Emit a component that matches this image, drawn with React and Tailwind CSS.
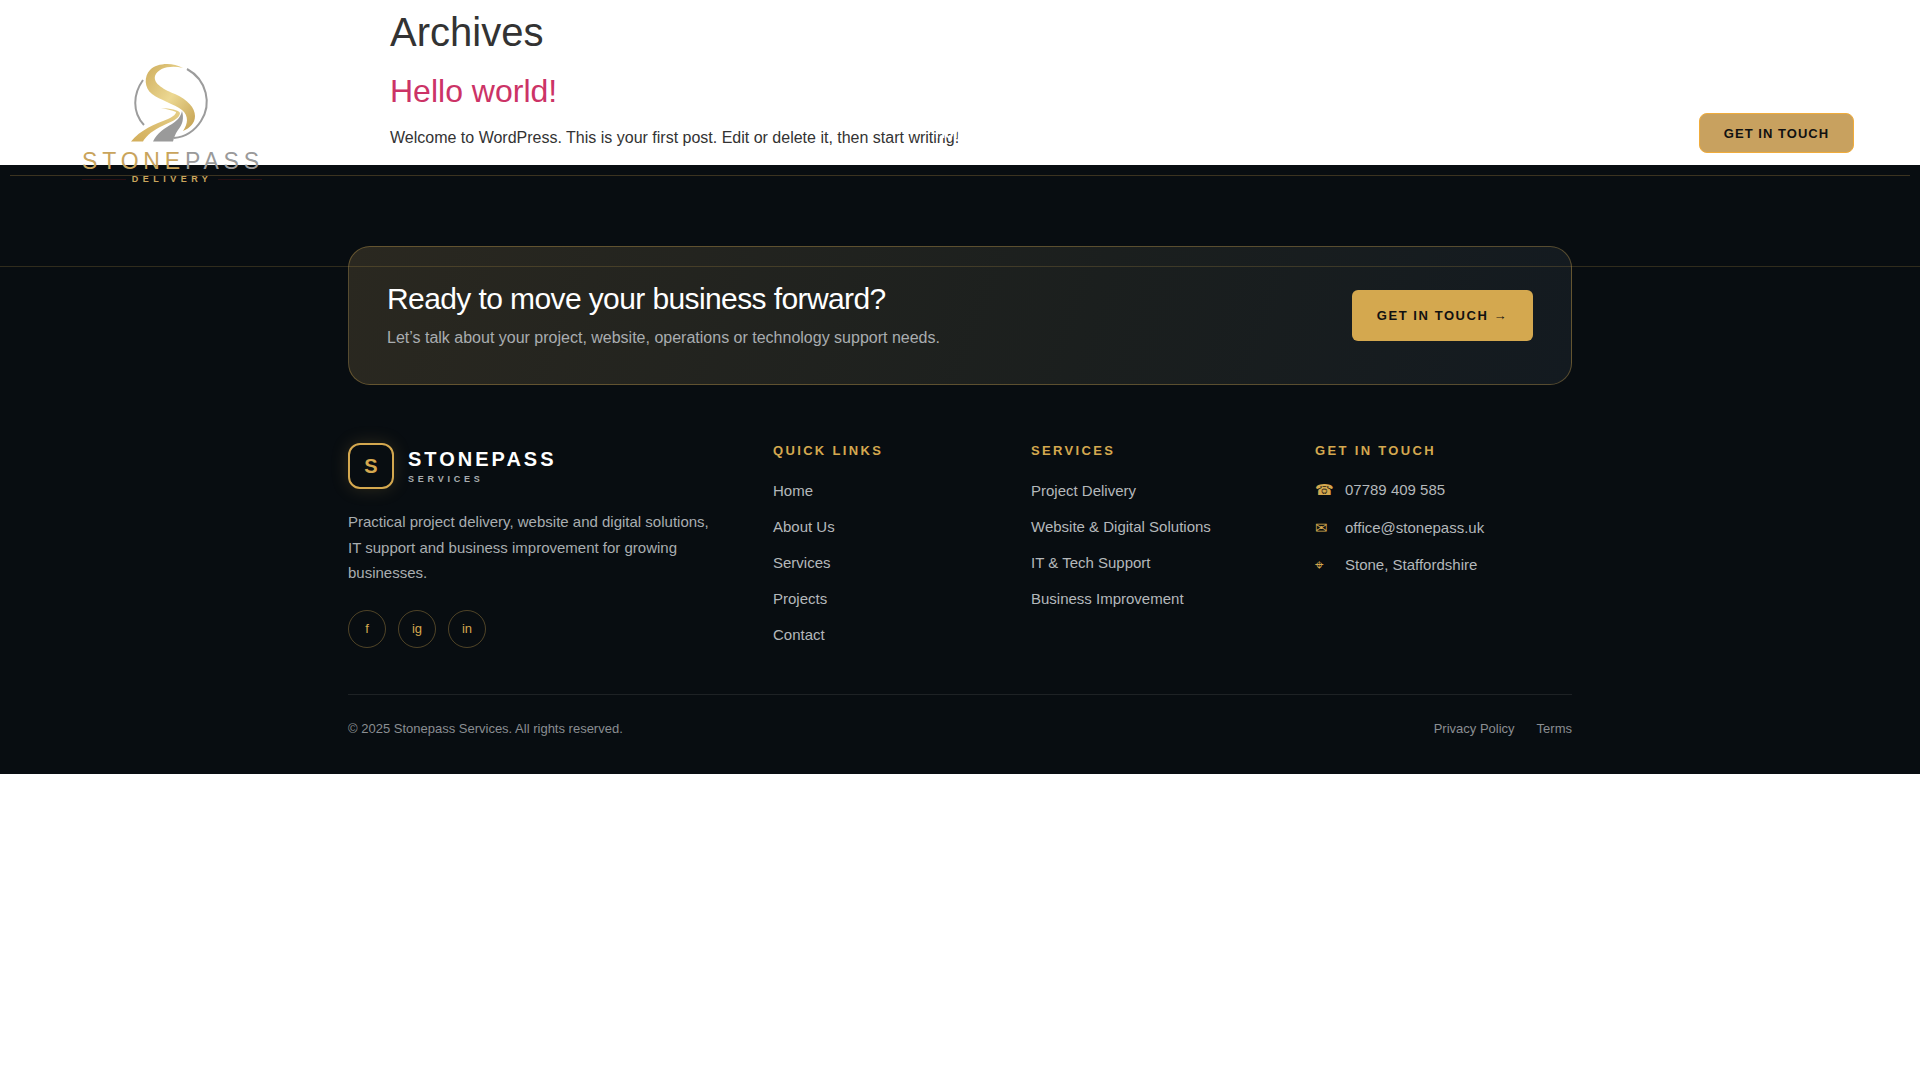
import React from "react";

const QUICK_LINKS = ["Home", "About Us", "Services", "Projects", "Contact"];
const SERVICES = ["Project Delivery", "Website & Digital Solutions", "IT & Tech Support", "Business Improvement"];
const CONTACT = [
  { icon: "☎", text: "07789 409 585" },
  { icon: "✉", text: "office@stonepass.uk" },
  { icon: "⌖", text: "Stone, Staffordshire" },
];

function LogoMark() {
  return (
    <svg width="180" height="82" viewBox="82 62 180 82" className="block">
      <defs>
        <linearGradient id="gold" x1="0" y1="0" x2="1" y2="1">
          <stop offset="0" stopColor="#cfae5e" />
          <stop offset="0.5" stopColor="#ecd892" />
          <stop offset="1" stopColor="#c39f4f" />
        </linearGradient>
        <linearGradient id="road" x1="0" y1="1" x2="1" y2="0">
          <stop offset="0" stopColor="#d2ad5a" />
          <stop offset="1" stopColor="#e6d08a" />
        </linearGradient>
      </defs>
      <path d="M143 80C133 94 132 112 144 125" fill="none" stroke="#9c9c9c" strokeWidth="2" />
      <path d="M187 69C207 80 212 104 201 121C194 132 184 137 174 138" fill="none" stroke="#9c9c9c" strokeWidth="2" />
      <path d="M183 68C170 65 158 68 155 76C153 84 165 90 175 94C188 100 195 108 195 116C195 123 190 128 183 131C188 124 189 116 182 110C174 104 160 100 152 94C144 88 144 76 150 70C157 63 172 62 183 68Z" fill="url(#gold)" />
      <path d="M131 141.5C140 130 155 124 168 119C174 116 176 114 176 112C172 110 166 109 161 108C170 108.500 179 110 180 113C180 119 170 122 160 127C150 132 145 138 143 141.500Z" fill="url(#road)" />
      <path d="M153 141.500C157 133 165 128 172 124C178 120 181 116 182 111C184 118 183 124 178 130C175 134 174 138 173 141.500Z" fill="#9a9a9a" />
    </svg>
  );
}

function Logo() {
  return (
    <div className="w-[180px]">
      <LogoMark />
      <div className="mt-[4px] flex text-[23px] leading-[26px] tracking-[0.21em] whitespace-nowrap">
        <span className="text-[#c9a45c]">STONE</span>
        <span className="text-[#9a9a9a]">PASS</span>
      </div>
      <div className="mt-[-1px] flex items-center justify-center gap-[6px]">
        <span className="h-px w-[44px] bg-[#2a1014]" />
        <span className="text-[9px] leading-[12px] font-bold tracking-[0.5em] text-[#c9a45c] whitespace-nowrap">DELIVERY</span>
        <span className="h-px w-[44px] bg-[#2a1014]" />
      </div>
    </div>
  );
}

function ColumnTitle({ children }) {
  return <h4 className="text-[13px] leading-[15px] font-bold tracking-[0.18em] text-[#d4a84f]">{children}</h4>;
}

function LinkColumn({ title, links }) {
  return (
    <div>
      <ColumnTitle>{title}</ColumnTitle>
      <ul className="mt-[15px]">
        {links.map((l) => (
          <li key={l} className="text-[15px] leading-[36px] text-[#b4b8bb]">{l}</li>
        ))}
      </ul>
    </div>
  );
}

export default function App() {
  return (
    <div className="relative min-h-[1080px] bg-white font-['Liberation_Sans',Arial,sans-serif]">
      {/* header sits over the page */}
      <header className="absolute inset-x-0 top-0 z-10 flex items-start pl-[82px] pr-[66px] pt-[62px]">
        <Logo />
        <nav className="ml-[673px] mt-[62px] text-[14px] leading-[18px] font-bold text-white">Home</nav>
        <a className="ml-auto mt-[51px] flex h-[40px] w-[155px] items-center justify-center rounded-[8px] border border-[#f0ac3c] bg-[#c8a15f] pt-[1px] text-[13px] font-bold tracking-[0.08em] text-[#111]">
          GET IN TOUCH
        </a>
      </header>

      <main className="mx-auto w-[1140px] pt-[8px] pb-[15px] text-[#333]">
        <h1 className="text-[40px] leading-[48px]">Archives</h1>
        <h2 className="mt-[16px] text-[32px] leading-[38px] text-[#cc3366]">Hello world!</h2>
        <p className="mt-[16px] text-[16px] leading-[24px]">Welcome to WordPress. This is your first post. Edit or delete it, then start writing!</p>
      </main>

      <footer className="relative bg-[#080d11] pt-[81px] pb-[35px]">
        <div className="absolute left-[10px] right-[10px] top-[10px] h-px bg-[#d4a84f]/25" />
        <div className="absolute inset-x-0 top-[101px] h-px bg-[#d4a84f]/20" />

        <div className="mx-auto w-[1224px]">
          <div className="flex h-[139px] items-center justify-between rounded-[22px] border border-[#d4a84f]/35 bg-[linear-gradient(110deg,#2a2820_0%,#1b1f1e_60%,#131a20_100%)] px-[38px]">
            <div>
              <h3 className="text-[30px] leading-[36px] tracking-[-0.02em] text-white">Ready to move your business forward?</h3>
              <p className="mt-[9px] text-[16px] leading-[24px] text-[#a9adb0]">Let’s talk about your project, website, operations or technology support needs.</p>
            </div>
            <a className="flex h-[51px] w-[181px] items-center justify-center rounded-[6px] bg-[#d4a84f] text-[13px] font-bold tracking-[0.12em] text-[#111]">
              GET IN TOUCH →
            </a>
          </div>

          <div className="mt-[58px] grid grid-cols-[425px_258px_284px_257px]">
            <div>
              <div className="flex items-center gap-[14px]">
                <div className="flex h-[46px] w-[46px] items-center justify-center rounded-[12px] border-2 border-[#d4a84f] text-[20px] font-bold text-[#d4a84f] shadow-[0_0_18px_rgba(212,168,79,0.18)]">S</div>
                <div>
                  <div className="text-[20px] leading-[24px] font-bold tracking-[0.15em] text-white">STONEPASS</div>
                  <div className="mt-[2px] text-[9px] leading-[12px] font-bold tracking-[0.42em] text-[#a9adb0]">SERVICES</div>
                </div>
              </div>
              <p className="mt-[20px] w-[365px] text-[15px] leading-[25.5px] text-[#a9adb0]">
                Practical project delivery, website and digital solutions, IT support and business improvement for growing businesses.
              </p>
              <div className="mt-[24px] flex gap-[12px]">
                {["f", "ig", "in"].map((s) => (
                  <a key={s} className="flex h-[38px] w-[38px] items-center justify-center rounded-full border border-[#d4a84f]/35 text-[13px] text-[#d4a84f]">{s}</a>
                ))}
              </div>
            </div>
            <LinkColumn title="QUICK LINKS" links={QUICK_LINKS} />
            <LinkColumn title="SERVICES" links={SERVICES} />
            <div>
              <ColumnTitle>GET IN TOUCH</ColumnTitle>
              <ul className="mt-[13px]">
                {CONTACT.map((c) => (
                  <li key={c.text} className="flex text-[15px] leading-[37.5px] text-[#b4b8bb]">
                    <span className="w-[30px] text-[#d4a84f]">{c.icon}</span>
                    {c.text}
                  </li>
                ))}
              </ul>
            </div>
          </div>

          <div className="mt-[41px] flex items-center justify-between border-t border-[#1e2225] pt-[24px] text-[13px] leading-[20px] text-[#8a8e92]">
            <span>© 2025 Stonepass Services. All rights reserved.</span>
            <div className="flex gap-[22px]">
              <a>Privacy Policy</a>
              <a>Terms</a>
            </div>
          </div>
        </div>
      </footer>
    </div>
  );
}
